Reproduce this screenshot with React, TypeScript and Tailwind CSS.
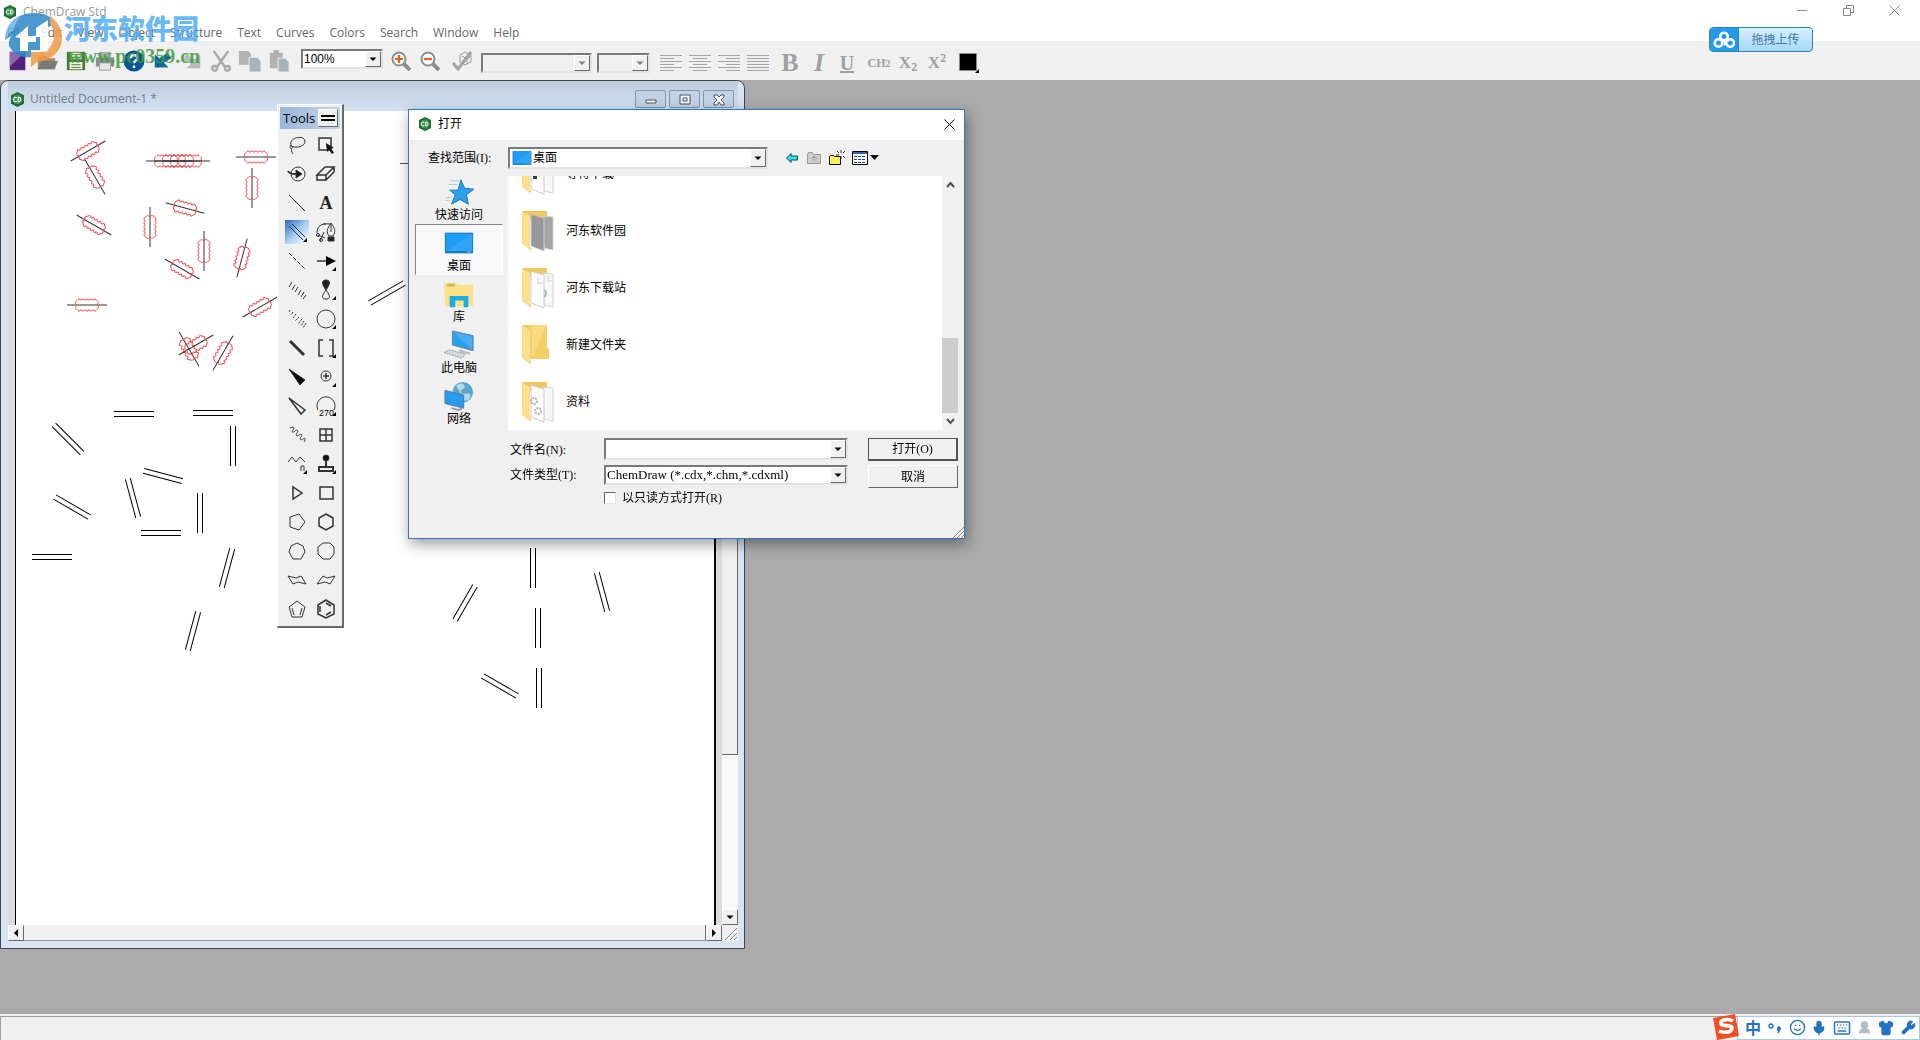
import type { ReactNode } from "react";
import { clsx } from "clsx";
import { Keyboard, Mic, Shirt, Smile, UserRound, Wrench } from "lucide-react";

const UI_FONT = "font-['Open_Sans','Noto_Sans_CJK_SC',sans-serif]";
const DIALOG_FONT = "font-['Liberation_Serif','Noto_Sans_CJK_SC',serif]";
const RAISED =
  "border border-t-white border-l-white border-r-[#696969] border-b-[#696969] bg-[#f0f0f0]";
const SUNKEN =
  "border-2 border-t-[#7a7a7a] border-l-[#7a7a7a] border-r-[#e3e3e3] border-b-[#e3e3e3]";

const MENUS = [
  "File",
  "Edit",
  "View",
  "Object",
  "Structure",
  "Text",
  "Curves",
  "Colors",
  "Search",
  "Window",
  "Help",
];

// [x, y, angle] in window coordinates
const RED_BONDS = [
  [88, 151, -30],
  [95, 177, 60],
  [166, 161, 0],
  [174, 161, 0],
  [182, 161, 0],
  [190, 161, 0],
  [256, 157, 0],
  [252, 188, 90],
  [185, 208, 15],
  [150, 227, 90],
  [94, 225, 30],
  [204, 251, 90],
  [242, 258, -75],
  [182, 269, 30],
  [87, 305, 0],
  [260, 307, -30],
  [189, 349, 60],
  [196, 345, -30],
  [223, 353, -60],
];

const DOUBLE_BONDS = [
  [134, 414, 0],
  [213, 413, 0],
  [68, 439, 45],
  [233, 446, 90],
  [163, 476, 15],
  [133, 498, 75],
  [72, 507, 30],
  [200, 513, 90],
  [161, 533, 0],
  [52, 557, 0],
  [227, 568, -75],
  [193, 631, -75],
  [387, 293, -30],
  [533, 568, 90],
  [465, 603, -60],
  [602, 592, 75],
  [538, 628, 90],
  [539, 688, 90],
  [500, 686, 30],
];

function AppIcon({ size = 14 }: { size?: number }) {
  return (
    <svg width={size} height={size} viewBox="0 0 14 14" className="shrink-0">
      <path d="M7 0l6 3v8l-6 3-6-3V3z" fill="#1d6b30" />
      <circle cx="7" cy="7" r="4.6" fill="#3f9350" />
      <path
        d="M6.3 5.4a2 2 0 1 0 0 3.2M7.7 5v4c3 .4 3-4.400 0-4z"
        fill="none"
        stroke="#fff"
        strokeWidth="1"
      />
    </svg>
  );
}

function Arrow({ dir = "down", color = "#000" }: { dir?: string; color?: string }) {
  return (
    <svg width="8" height="8" viewBox="0 0 8 8" className="shrink-0">
      {dir === "down" && <path d="M0.500 2.500h7L4 6z" fill={color} />}
      {dir === "left" && <path d="M6 0v8L2 4z" fill={color} />}
      {dir === "right" && <path d="M2 0v8l4-4z" fill={color} />}
    </svg>
  );
}

function Combo({
  label,
  value,
  className,
  disabled,
}: {
  label: string;
  value: string;
  className?: string;
  disabled?: boolean;
}) {
  return (
    <div
      className={clsx(
        "relative flex",
        SUNKEN,
        disabled ? "bg-[#f0f0f0]" : "bg-white",
        className
      )}
    >
      <select
        aria-label={label}
        disabled={disabled}
        className="min-w-0 flex-1 appearance-none bg-transparent pr-4 pl-px leading-4 text-black outline-none"
      >
        <option>{value}</option>
      </select>
      <span
        className={clsx(
          "pointer-events-none absolute inset-y-0 right-0 flex w-4 items-center justify-center",
          RAISED
        )}
      >
        <Arrow color={disabled ? "#808080" : "#000"} />
      </span>
    </div>
  );
}

const FILE_ICONS: { name: string; art: ReactNode }[] = [
  {
    name: "New",
    art: (
      <>
        <path d="M3 2h17v20H3z" fill="#53217f" />
        <path d="M3 2h17L3 18z" fill="#8c6aa9" />
      </>
    ),
  },
  {
    name: "Open",
    art: (
      <>
        <path d="M2 6h8l2 3h9v12H2z" fill="#a98a68" />
        <path d="M6 12h18l-4 9H2z" fill="#7c7a78" />
      </>
    ),
  },
  {
    name: "Save",
    art: (
      <>
        <path d="M2 2h20v20H2z" fill="#4e7a35" />
        <path d="M6 3h12v7H6zM5 13h14v8H5z" fill="#e9f2e4" />
        <path d="M7 5h10M7 8h10M7 16h10M7 19h10" stroke="#4e7a35" />
      </>
    ),
  },
  {
    name: "Print",
    art: (
      <>
        <path d="M6 2h12v6H6z" fill="#aaa" />
        <path d="M2 8h20v10H2z" fill="#8d8d8d" />
        <path d="M6 14h12v8H6z" fill="#e6e6e6" stroke="#999" />
      </>
    ),
  },
  {
    name: "Help",
    art: (
      <>
        <circle cx="12" cy="12" r="11.500" fill="#07569a" />
        <path
          d="M8.500 9c0-5 7.500-4.500 7 0-.2 2.500-3.500 2.500-3.500 5.500M12 17v2.500"
          fill="none"
          stroke="#fff"
          strokeWidth="2.600"
        />
      </>
    ),
  },
  {
    name: "Undo",
    art: <path d="M3 5v14h15l-5-5 8-5-4-6-9 6z" fill="#1066a0" />,
  },
  {
    name: "Redo",
    art: <path d="M21 5v15H6l5-5-8-4 2-6 10 5z" fill="#b4b9bd" />,
  },
  {
    name: "Cut",
    art: (
      <g fill="none" stroke="#a9a9a9" strokeWidth="2.600">
        <path d="M4 1l12 17M20 1L8 18" />
        <circle cx="5" cy="20" r="2.600" />
        <circle cx="19" cy="20" r="2.600" />
      </g>
    ),
  },
  {
    name: "Copy",
    art: (
      <>
        <path d="M0 1h10l3 3v12H0z" fill="#b2b2b2" />
        <path d="M11 8h9l4 4v12H11z" fill="#a9b3bc" stroke="#efefef" />
      </>
    ),
  },
  {
    name: "Paste",
    art: (
      <>
        <path d="M2 3h4V0h6v3h4v17H2z" fill="#b2b2b2" />
        <path d="M11 9h8l4 4v11H11z" fill="#a9b3bc" stroke="#efefef" />
      </>
    ),
  },
];

function Magnifier({ plus }: { plus?: boolean }) {
  return (
    <svg width="20" height="20" viewBox="0 0 20 20">
      <path d="M13 13l6 6" stroke="#8d8d8d" strokeWidth="4" />
      <circle cx="8" cy="8" r="6.500" fill="#fff" stroke="#8d8d8d" strokeWidth="2" />
      <path
        d={plus ? "M4 8h8M8 4v8" : "M4 8h8"}
        stroke="#e2621b"
        strokeWidth="2.200"
      />
    </svg>
  );
}

const ALIGNMENTS = [
  { name: "Align left", d: "M0 1h22M0 4h14M0 7h22M0 10h14M0 13h22M0 16h14" },
  { name: "Align center", d: "M0 1h22M4 4h14M0 7h22M4 10h14M0 13h22M4 16h14" },
  { name: "Align right", d: "M0 1h22M8 4h14M0 7h22M8 10h14M0 13h22M8 16h14" },
  { name: "Justify", d: "M0 1h22M0 4h22M0 7h22M0 10h22M0 13h22M0 16h22" },
];

function Toolbar() {
  return (
    <div className="flex h-[39px] items-center overflow-hidden bg-[#f0f0f0] pl-[3px]">
      {FILE_ICONS.map(({ name, art }) => (
        <button
          key={name}
          aria-label={name}
          className="flex w-[29px] shrink-0 justify-center"
        >
          <svg width="22" height="22" viewBox="0 0 24 24">
            {art}
          </svg>
        </button>
      ))}
      <Combo
        label="Zoom level"
        value="100%"
        className="mb-1 ml-2 h-5 w-[82px] font-['Liberation_Sans',sans-serif] text-xs"
      />
      <button aria-label="Zoom in" className="ml-2">
        <Magnifier plus />
      </button>
      <button aria-label="Zoom out" className="ml-[9px]">
        <Magnifier />
      </button>
      <button aria-label="Check structure" className="ml-3">
        <svg width="22" height="22" viewBox="0 0 22 22" fill="none">
          <path d="M1 13l5 6L19 2" stroke="#a4a4a4" strokeWidth="3" />
          <path
            d="M8 5l5-3 6 3v7l-6 3-5-3zM10 6l5 3v5M15 9l4-3"
            stroke="#999"
          />
        </svg>
      </button>
      <div className="flex items-center pt-1">
        <Combo label="Font" value="" disabled className="ml-[7px] h-5 w-[111px]" />
        <Combo label="Font size" value="" disabled className="ml-[5px] h-5 w-[53px]" />
        <div className="ml-[10px] flex gap-[7px]">
          {ALIGNMENTS.map(({ name, d }) => (
            <button key={name} aria-label={name}>
              <svg width="22" height="18" viewBox="0 0 22 18">
                <path d={d} transform="translate(0 .5)" stroke="#a5a5a5" />
              </svg>
            </button>
          ))}
        </div>
        <div className="flex items-center pl-[10px] font-['Liberation_Serif',serif] font-bold text-[#a0a0a0]">
          <button className="w-[22px] text-[26px] leading-7">B</button>
          <button className="ml-[7px] w-[22px] text-[26px] leading-7 italic">I</button>
          <button className="ml-[6px] w-[22px] text-xl leading-6 underline">U</button>
          <button className="ml-[8px] w-[26px] text-xs">
            CH<span className="text-[10px]">2</span>
          </button>
          <button className="ml-1 w-6 text-[17px] leading-6">
            X<sub className="text-xs">2</sub>
          </button>
          <button className="ml-[5px] w-6 text-[17px] leading-6">
            X<sup className="text-xs">2</sup>
          </button>
        </div>
        <button aria-label="Text color" className="ml-[10px]">
          <svg width="20" height="22" viewBox="0 0 20 22">
            <path d="M.5 1.500h17v17H.5z" stroke="#888" />
            <path d="M20 17v4h-4z" />
          </svg>
        </button>
      </div>
    </div>
  );
}

function Watermark() {
  return (
    <div className="pointer-events-none absolute top-2 left-1 flex">
      <svg width="60" height="60" viewBox="0 0 60 60" opacity="0.850">
        <path
          d="M1 32C2 16 13 5 30 5c10 0 17 3 22 10l-9 5v22H27v7c-8 1-16-2-20-8-3-4-3-6 0-13z"
          fill="#2c88c8"
        />
        <path
          d="M46 8c16 11 16 33 0 42-5 3-9 3-13 4l-6 5V44h15c8-7 11-19 4-29z"
          fill="#f19a47"
        />
        <path
          d="M11 29l13-11v10h8v-8l12-8v31h-8V29h-4v5h-8v9h-8V30z"
          fill="#fff"
        />
        <path d="M1 33C1 18 8 12 17 7c-4 6-6 9-7 14-4 3-7 7-9 12z" fill="#66b7e6" />
      </svg>
      <div className="flex flex-col pt-1">
        <span className="font-['Noto_Sans_CJK_SC',sans-serif] text-[27px] leading-8 font-black text-[#4fabf5]/85">
          河东软件园
        </span>
        <span className="pt-[2px] pl-1 font-['Liberation_Serif',serif] text-xl leading-5 font-bold text-[#3d9b3f]/85">
          www.pc0359.cn
        </span>
      </div>
    </div>
  );
}

function Structures() {
  return (
    <svg className="block h-full w-full" fill="none">
      <g transform="translate(-16 -111)">
        {RED_BONDS.map(([x, y, a]) => (
          <g key={`${x}-${y}`} transform={`translate(${x} ${y}) rotate(${a})`}>
            <path d="M-20 0h40" stroke="#333" />
            <path
              d="M-9 -5.500q1 -1.500 2 0t2 0t2 0t2 0t2 0t2 0t2 0t2 0t2 0l2 2q1 1 0 2t0 2t0 3l-2 2q-1 1.500 -2 0t-2 0t-2 0t-2 0t-2 0t-2 0t-2 0t-2 0t-2 0l-2 -2q-1 -1 0 -2t0 -2t0 -3z"
              stroke="#f04848"
            />
          </g>
        ))}
        {DOUBLE_BONDS.map(([x, y, a]) => (
          <path
            key={`${x}-${y}`}
            d="M-20 -2.500h40M-20 2.500h40"
            stroke="#000"
            transform={`translate(${x} ${y}) rotate(${a})`}
          />
        ))}
        <path d="M400 163.500h40" stroke="#555" />
      </g>
    </svg>
  );
}

const WINDOW_BUTTONS = [
  { name: "Minimize document", d: "M6 8h10v3H6z" },
  { name: "Restore document", d: "M6 3h10v9H6zM9 6h4v3H9z" },
  {
    name: "Close document",
    d: "M6 3h3l2 2 2-2h3v2l-3 3 3 3v2h-3l-2-3-2 3H6v-2l3-3-3-3z",
  },
];

function DocumentWindow() {
  return (
    <section className="flex h-[869px] w-[745px] flex-col rounded-t-lg border border-[#3f454c] bg-[#d7e4f2] pr-[6px] pb-[7px] pl-[7px]">
      <header className="flex h-[30px] shrink-0 items-center gap-[5px] bg-linear-to-b from-[#bfcddd] to-[#d3e2f2] pt-[6px] pl-[2px]">
        <AppIcon size={15} />
        <h2 className="flex-1 text-xs text-[#6f7d8c]">Untitled Document-1 *</h2>
        <div className="mr-1 flex gap-[3px]">
          {WINDOW_BUTTONS.map(({ name, d }) => (
            <button
              key={name}
              aria-label={name}
              className="flex h-[18px] w-[31px] items-center justify-center rounded-xs border border-[#8495ab] bg-[#c3d3e5]"
            >
              <svg width="22" height="15" viewBox="0 0 22 15">
                <path d={d} fill="#f5f8fb" stroke="#4a5360" />
              </svg>
            </button>
          ))}
        </div>
      </header>
      <div className="flex min-h-0 flex-1 bg-[#dcdcdc]">
        <div className="ml-[7px] min-w-0 flex-1 border-r-2 border-l border-black bg-white">
          <Structures />
        </div>
        <div className="ml-[6px] flex w-4 flex-col bg-[#f8f8f8]">
          <div className="h-[644px] border-r border-b border-[#696969] bg-[#f0f0f0]" />
          <div className="flex-1" />
          <button
            aria-label="Scroll down"
            className={clsx("flex h-4 items-center justify-center", RAISED)}
          >
            <Arrow />
          </button>
        </div>
      </div>
      <div className="flex h-4 shrink-0 bg-[#f0f0f0]">
        <button
          aria-label="Scroll left"
          className={clsx("flex w-4 items-center justify-center", RAISED)}
        >
          <Arrow dir="left" />
        </button>
        <div className="flex-1 border-r border-b border-[#696969] border-b-[#999]" />
        <button
          aria-label="Scroll right"
          className={clsx("flex w-4 items-center justify-center", RAISED)}
        >
          <Arrow dir="right" />
        </button>
        <svg width="16" height="16" viewBox="0 0 16 16">
          <path d="M3 15L15 3M8 15l7-7M12 15l3-3" stroke="#8a8a8a" />
        </svg>
      </div>
    </section>
  );
}

const TOOLS: { name: string; flag?: boolean; art: ReactNode }[] = [
  {
    name: "Lasso",
    art: (
      <path d="M6 12C4 6 13 3 18 5c6 5-3 12-12 8zm0 0c-3 2 1 5 2 2M6 15c1 2 0 4 2 6" />
    ),
  },
  {
    name: "Marquee",
    art: (
      <>
        <path d="M5 5h12v12H5z" strokeWidth="1.500" />
        <path d="M12 10l8 5-3 .5 3 4-2 1.500-3-4-2 2z" fill="#111" stroke="none" />
      </>
    ),
  },
  {
    name: "Structure perspective",
    art: (
      <>
        <circle cx="13" cy="12" r="7" />
        <path d="M3 9c1 3 4 3 12 3" strokeWidth="2" />
        <path d="M11 8l6 4-6 4z" fill="#111" />
      </>
    ),
  },
  {
    name: "Eraser",
    art: <path d="M3 13l8-8h9l-8 8zM3 13v5h9v-5M12 18l8-8V5" strokeWidth="1.500" />,
  },
  { name: "Solid bond", art: <path d="M4 4l16 16" /> },
  {
    name: "Text",
    art: (
      <text
        x="12"
        y="18"
        textAnchor="middle"
        fontFamily="Liberation Serif, serif"
        fontSize="18"
        fontWeight="bold"
        fill="#222"
        stroke="none"
      >
        A
      </text>
    ),
  },
  { name: "Multiple bonds", flag: true, art: <path d="M7 4l13 13M4 6l14 14" /> },
  {
    name: "Pen",
    art: (
      <>
        <path d="M3 13C3 6 7 3 16 4M9 4h3M4 15l7 3M10 12l-4 9" />
        <circle cx="4" cy="15" r="1.500" />
        <circle cx="7" cy="20" r="1.500" />
        <path d="M17 3c-4 6-5 9-2 13h4c3-4 2-8-2-13zm0 1v8" />
        <path d="M14 17h6v4h-6z" fill="#222" />
      </>
    ),
  },
  { name: "Dashed bond", art: <path d="M4 4l17 17" strokeDasharray="4 2" /> },
  {
    name: "Arrow",
    flag: true,
    art: (
      <>
        <path d="M3 12h10" strokeWidth="1.500" />
        <path d="M12 7l10 5-10 5z" fill="#000" stroke="none" />
      </>
    ),
  },
  {
    name: "Hashed bond",
    art: <path d="M7 4L4 9M10 7l-3 5M13 9l-3 5M16 12l-3 5M19 14l-3 5M21 17l-3 4" />,
  },
  {
    name: "Orbital",
    flag: true,
    art: (
      <>
        <path d="M12 12c-6-8-3-10 0-10s6 2 0 10z" fill="#222" />
        <path d="M12 12c-6 8-3 9 0 9s6-1 0-9z" />
      </>
    ),
  },
  {
    name: "Hashed wedged bond",
    art: (
      <path
        d="M5 3l-1 2M8 5L6 8M11 7l-3 4M14 10l-4 4M17 12l-4 5M19 14l-3 5M21 16l-3 5"
        strokeDasharray="2 1"
      />
    ),
  },
  { name: "Drawing elements", flag: true, art: <circle cx="12" cy="12" r="9" /> },
  { name: "Bold bond", art: <path d="M5 5l14 14" strokeWidth="3" /> },
  {
    name: "Brackets",
    flag: true,
    art: <path d="M9 4H5v16h4M15 4h4v16h-4" strokeWidth="1.500" />,
  },
  { name: "Wedged bond", art: <path d="M4 4l16 11-5 5z" fill="#000" /> },
  {
    name: "Chemical symbols",
    flag: true,
    art: (
      <>
        <circle cx="12" cy="11" r="5" />
        <path d="M9 11h6M12 8v6" strokeWidth="1.500" />
      </>
    ),
  },
  { name: "Hollow wedged bond", art: <path d="M4 4l16 12-4 4z" strokeWidth="1.500" /> },
  {
    name: "Arc",
    flag: true,
    art: (
      <>
        <path d="M4 16a9 9 0 1 1 16 0" />
        <text
          x="5"
          y="22"
          fontFamily="Liberation Sans, sans-serif"
          fontSize="9"
          fill="#000"
          stroke="none"
        >
          270
        </text>
      </>
    ),
  },
  {
    name: "Wavy bond",
    art: (
      <path d="M5 5c4-2 5 0 3 2s0 3 2 1 4 0 2 2 0 4 2 2 4 0 2 2 0 4 2 2 3 0 1 3" />
    ),
  },
  { name: "Table", art: <path d="M6 6h12v12H6zM12 6v12M6 12h12" strokeWidth="1.500" /> },
  {
    name: "Acyclic chain",
    flag: true,
    art: (
      <>
        <path d="M3 10l4-5 4 5 4-5 5 5" />
        <path d="M16 19v-5h3v5" />
      </>
    ),
  },
  {
    name: "Templates",
    flag: true,
    art: (
      <>
        <circle cx="12" cy="6" r="3" fill="#111" />
        <path d="M12 8v6M5 15h14v4H5z" strokeWidth="2" />
      </>
    ),
  },
  { name: "Cyclopropane", art: <path d="M8 6v12l9-6z" strokeWidth="1.500" /> },
  { name: "Cyclobutane", art: <path d="M6 6h13v12H6z" strokeWidth="1.500" /> },
  { name: "Cyclopentane", art: <path d="M5 7l9-3 6 8-6 8-9-3z" /> },
  { name: "Cyclohexane", art: <path d="M12 4l7 4v8l-7 4-7-4V8z" strokeWidth="1.500" /> },
  { name: "Cycloheptane", art: <path d="M12 4l6 3 2 6-4 7H8l-4-7 2-6z" /> },
  { name: "Cyclooctane", art: <path d="M9 4h7l4 4v7l-4 5H9l-5-5V8z" /> },
  { name: "Chair one", art: <path d="M3 8l8 2 5-2 5 8-8-2-5 2z" /> },
  { name: "Chair two", art: <path d="M21 8l-8 2-4-2-6 8 8-2 5 2z" /> },
  {
    name: "Cyclopentadiene",
    art: <path d="M12 4l8 6-3 10H7L4 10zM17 11l-2 7M7 11l2 7" />,
  },
  {
    name: "Benzene",
    art: <path d="M12 3l8 5v9l-8 4-8-4V8zM12 6l5 3M17 15l-5 3M6 9v6" strokeWidth="1.500" />,
  },
];

function ToolsPalette() {
  return (
    <aside
      className={clsx(
        "absolute top-[104px] left-[277px] w-[67px] p-[2px] pb-1",
        RAISED,
        "border-r-2 border-b-2"
      )}
    >
      <header className="flex h-[22px] items-center justify-between bg-linear-to-r from-[#9ab5d8] to-[#c5d6ea] pr-[2px] pl-[3px]">
        <h2 className="pb-px text-[13px] leading-5 text-black">Tools</h2>
        <button
          aria-label="Palette menu"
          className={clsx("flex h-[18px] w-5 items-center justify-center", RAISED)}
        >
          <svg width="14" height="6" viewBox="0 0 14 6">
            <path d="M0 1h14M0 5h14" stroke="#000" strokeWidth="2" />
          </svg>
        </button>
      </header>
      <div className="grid grid-cols-[24px_24px] gap-x-[5px] gap-y-[5px] pt-1 pb-px pl-[5px]">
        {TOOLS.map(({ name, flag, art }) => (
          <button
            key={name}
            aria-label={name}
            className={clsx(
              "size-6",
              name === "Multiple bonds" &&
                "bg-linear-to-br from-[#2a63b8] via-[#a7cdf3] to-white"
            )}
          >
            <svg
              width="24"
              height="24"
              viewBox="0 0 24 24"
              fill="none"
              stroke="#333"
              className="block"
            >
              {art}
              {flag && <path d="M22 18v4h-4z" fill="#000" stroke="none" />}
            </svg>
          </button>
        ))}
      </div>
    </aside>
  );
}

const DesktopArt = (
  <>
    <path d="M1.500 5.500h29v21h-29z" fill="#1e9df5" stroke="#0870bd" />
    <path d="M2 25L30 6v20H2z" fill="#44b0fa" opacity="0.500" />
    <path d="M2 25.500h28" stroke="#0a5f9e" />
    <path d="M25 25.500h4" stroke="#fff" strokeDasharray="1 1" />
  </>
);

const PLACES: { name: string; art: ReactNode }[] = [
  {
    name: "快速访问",
    art: (
      <>
        <path
          d="M18 3l4 9 10 1-8 6 2 10-9-5-9 5 4-10-6-5h9z"
          fill="#2da0ea"
          stroke="#1379bd"
        />
        <path d="M7 4h9M5 8h9M2 22h6M1 25h5" stroke="#9ec9e8" />
      </>
    ),
  },
  { name: "桌面", art: DesktopArt },
  {
    name: "库",
    art: (
      <>
        <path d="M0 4h12l3 2h16v23H1z" fill="#fce08a" />
        <path d="M3 5h9v3H3z" fill="#d8b757" />
        <path d="M6 18h20v12h-5v-7h-9v7H6z" fill="#18afe0" />
      </>
    ),
  },
  {
    name: "此电脑",
    art: (
      <>
        <path d="M9 1l22 5v16L9 16z" fill="#299ff0" stroke="#5e7f96" />
        <path d="M10 2l20 19V7z" fill="#69bdf7" opacity="0.500" />
        <path d="M17 20l-1 4 12 2v-2l-7-2z" fill="#b7bec4" />
        <path d="M0 24l6-3 17 5-4 4z" fill="#d5d9dc" stroke="#90979c" strokeDasharray="2 1" />
      </>
    ),
  },
  {
    name: "网络",
    art: (
      <>
        <circle cx="20" cy="12" r="11" fill="#5fa6c8" />
        <path d="M13 5c4-4 9-2 9 1s-5 2-4 6 9-1 10 3-3 7-6 6" fill="#b3dbe2" />
        <path d="M1 10l20 5v14L1 24z" fill="#269cf0" stroke="#59788d" />
        <path d="M8 29l8 2 3-2" stroke="#8f999f" fill="none" strokeWidth="2" />
      </>
    ),
  },
];

function FolderIcon({ kind }: { kind: string }) {
  return (
    <svg width="36" height="44" viewBox="0 0 36 44" className="shrink-0">
      <path d="M1 2h25v9H1z" fill="#efc75b" />
      {kind === "empty" ? (
        <>
          <path d="M8 2h18v22l2 2v10H8z" fill="#f4cf67" />
          <path d="M11 2h15L11 34z" fill="#f8da7f" />
        </>
      ) : (
        <>
          <path
            d="M21 7l11 1v33l-9-2z"
            fill={kind === "gray" ? "#a5a5a5" : "#f7f7f7"}
            stroke="#d5d5d5"
          />
          <path
            d="M10 5l13 4v33l-13-5z"
            fill={kind === "gray" ? "#999" : "#fdfdfd"}
            stroke="#ccc"
          />
        </>
      )}
      {kind === "gears" && (
        <g fill="none" stroke="#a9b5bf" strokeWidth="2" strokeDasharray="2 1">
          <circle cx="13" cy="21" r="3" />
          <circle cx="17" cy="31" r="3" />
        </g>
      )}
      {kind === "docs" && (
        <>
          <path d="M17 11v6h5M27 10v5h4" fill="none" stroke="#ccc" />
          <path d="M23 24a4 4 0 0 1 0 7" fill="none" stroke="#a9b5bf" strokeWidth="2" />
        </>
      )}
      {kind === "dark" && <path d="M12 22h4v5h-4z" fill="#24483a" />}
      <path d="M1 2l8 5v34l-8-6z" fill="#fbdf8d" />
      <path d="M9 37l1 4-2-1z" fill="#e6c05a" />
    </svg>
  );
}

const FOLDERS = [
  { name: "等待下载", kind: "dark" },
  { name: "河东软件园", kind: "gray" },
  { name: "河东下载站", kind: "docs" },
  { name: "新建文件夹", kind: "empty" },
  { name: "资料", kind: "gears" },
];

function Chevron({ d }: { d: string }) {
  return (
    <svg width="9" height="7" viewBox="0 0 9 7">
      <path d={d} fill="none" stroke="#505050" strokeWidth="2" />
    </svg>
  );
}

function OpenDialog() {
  return (
    <section
      role="dialog"
      aria-label="打开"
      className={clsx(
        "absolute top-[109px] left-[408px] h-[430px] w-[557px] border border-[#2f7ab8] bg-[#f0f0f0] text-xs text-black shadow-[2px_5px_14px_rgba(0,0,0,0.4)]",
        DIALOG_FONT
      )}
    >
      <header className="flex h-[30px] items-center gap-[6px] bg-white pr-[9px] pb-[2px] pl-[9px]">
        <AppIcon />
        <h2 className="flex-1">打开</h2>
        <button aria-label="关闭">
          <svg width="11" height="11" viewBox="0 0 11 11">
            <path d="M.5.5l10 10M10.500.5l-10 10" stroke="#000" />
          </svg>
        </button>
      </header>
      <div className="flex h-9 items-center">
        <label htmlFor="look-in" className="w-[99px] pl-[19px]">
          查找范围(I):
        </label>
        <div className={clsx("relative flex h-[22px] w-[260px] bg-white", SUNKEN)}>
          <svg
            width="20"
            height="18"
            viewBox="0 4 32 24"
            className="pointer-events-none absolute left-[2px]"
          >
            {DesktopArt}
          </svg>
          <select
            id="look-in"
            className="flex-1 appearance-none bg-transparent pl-[23px] outline-none"
          >
            <option>桌面</option>
          </select>
          <span
            className={clsx(
              "pointer-events-none absolute inset-y-0 right-0 flex w-4 items-center justify-center",
              RAISED
            )}
          >
            <Arrow />
          </span>
        </div>
        <div className="flex items-center gap-[7px] pl-[17px]">
          <button aria-label="后退">
            <svg width="14" height="16" viewBox="0 0 14 16">
              <path d="M1.500 8L6 3.500V6h6.500v4H6v2.500z" fill="#2ee6e6" stroke="#0a4a5c" />
            </svg>
          </button>
          <button aria-label="上一级" disabled>
            <svg width="16" height="14" viewBox="0 0 16 14">
              <path d="M1.500 12.500v-9l1-2h4l1 2h7v9z" fill="#ccc" stroke="#999" />
              <path d="M5 8l3-3 3 3M8 6v4" fill="none" stroke="#999" />
            </svg>
          </button>
          <button aria-label="新建文件夹">
            <svg width="16" height="16" viewBox="0 0 16 16">
              <path d="M.5 14.500v-8l1-1h3l1 1h6v8z" fill="#fff34d" stroke="#000" />
              <path
                d="M12 0v3M12 6v3M8 1l2 2M14 3l2-2M14 6l2 2M7 5h3"
                stroke="#333"
              />
            </svg>
          </button>
          <button aria-label="查看" className="flex items-center gap-[2px]">
            <svg width="16" height="14" viewBox="0 0 16 14">
              <path d="M.5.5h15v13H.5z" fill="#fff" stroke="#000" />
              <path d="M1 2h14" stroke="#2c63b8" strokeWidth="2" />
              <path
                d="M2 5.500h12M2 8.500h12M2 11.500h12"
                stroke="#223c8c"
                strokeDasharray="3 1"
              />
            </svg>
            <svg width="9" height="6" viewBox="0 0 9 6">
              <path d="M0 0h9L4.500 5z" />
            </svg>
          </button>
        </div>
      </div>
      <div className="flex h-[254px]">
        <nav className="mr-[5px] ml-[6px] flex w-[88px] flex-col">
          {PLACES.map(({ name, art }, i) => (
            <button
              key={name}
              className={clsx(
                "flex flex-col items-center justify-end border leading-4",
                i === 0 ? "h-12" : "h-[51px]",
                name === "桌面"
                  ? "border-t-[#858585] border-r-white border-b-white border-l-[#858585] bg-[#f8f8f8]"
                  : "border-transparent"
              )}
            >
              <svg width="30" height="30" viewBox="0 0 32 32">
                {art}
              </svg>
              {name}
            </button>
          ))}
        </nav>
        <div className="flex min-w-0 flex-1 bg-white">
          <ul className="flex flex-1 flex-col justify-end overflow-hidden">
            {FOLDERS.map(({ name, kind }) => (
              <li
                key={name}
                className="flex h-[57px] shrink-0 items-center gap-[9px] pt-px pl-[13px]"
              >
                <FolderIcon kind={kind} />
                {name}
              </li>
            ))}
          </ul>
        </div>
        <div className="mr-[6px] flex w-4 flex-col items-center">
          <button aria-label="向上滚动" className="flex h-[17px] items-center">
            <Chevron d="M1 6l3.500-4L8 6" />
          </button>
          <div className="flex-1" />
          <div className="h-[75px] w-full bg-[#cdcdcd]" />
          <button aria-label="向下滚动" className="flex h-[17px] items-center">
            <Chevron d="M1 1l3.500 4L8 1" />
          </button>
        </div>
      </div>
      <form className="grid grid-cols-[95px_244px_90px] gap-y-1 pt-2 pl-[100px]">
        <label htmlFor="file-name" className="self-center pl-px">
          文件名(N):
        </label>
        <div className={clsx("flex h-[22px] bg-white", SUNKEN)}>
          <input
            id="file-name"
            autoFocus
            className="min-w-0 flex-1 bg-transparent pl-px outline-none"
          />
          <button
            type="button"
            aria-label="历史文件"
            className={clsx("flex w-4 items-center justify-center", RAISED)}
          >
            <Arrow />
          </button>
        </div>
        <button
          type="button"
          className="ml-5 h-[23px] w-[90px] border border-r-2 border-b-2 border-[#555] bg-[#f0f0f0]"
        >
          打开(O)
        </button>
        <label htmlFor="file-type" className="pl-px leading-5">
          文件类型(T):
        </label>
        <div className={clsx("relative flex h-5 bg-white", SUNKEN)}>
          <select
            id="file-type"
            className="min-w-0 flex-1 appearance-none bg-transparent pr-4 pl-px text-[13px] leading-4 outline-none"
          >
            <option>ChemDraw (*.cdx,*.chm,*.cdxml)</option>
          </select>
          <span
            className={clsx(
              "pointer-events-none absolute inset-y-0 right-0 flex w-4 items-center justify-center",
              RAISED
            )}
          >
            <Arrow />
          </span>
        </div>
        <button type="button" className={clsx("ml-5 h-[23px] w-[90px]", RAISED)}>
          取消
        </button>
        <label className="col-start-2 flex items-center gap-[6px] leading-3">
          <input
            type="checkbox"
            className="size-3 appearance-none border border-t-[#696969] border-r-[#e3e3e3] border-b-[#e3e3e3] border-l-[#696969] bg-white"
          />
          以只读方式打开(R)
        </label>
      </form>
      <svg
        width="12"
        height="12"
        viewBox="0 0 12 12"
        className="absolute right-0 bottom-0"
      >
        <path d="M1 12L12 1M5 12l7-7M9 12l3-3" stroke="#8a8a8a" />
      </svg>
    </section>
  );
}

function UploadButton() {
  return (
    <button className="absolute top-[27px] right-[107px] flex h-[25px] w-[104px] overflow-hidden rounded-sm border border-[#3385b0] bg-linear-to-b from-[#d6efff] to-[#a5d8fa] text-xs text-[#44779c]">
      <span className="flex h-full w-[29px] items-center justify-center border-r border-[#3385b0] bg-[#239be9]">
        <svg width="22" height="18" viewBox="0 0 22 18">
          <g fill="none" stroke="#fff" strokeWidth="2.600">
            <circle cx="11" cy="5.500" r="3.800" />
            <circle cx="5.500" cy="12" r="3.800" />
            <path d="M11 9l3 5a3.800 3.800 0 1 0 0-4l-3 4" />
          </g>
        </svg>
      </span>
      <span className="flex-1 self-center pt-px">拖拽上传</span>
    </button>
  );
}

function StatusBar() {
  return (
    <footer className="flex h-[26px] shrink-0 items-end bg-[#f0f0f0] pt-[2px]">
      <div className="h-6 flex-1 border-t border-l border-[#a0a0a0]" />
      <div className="relative flex h-6 w-[183px] items-center border border-[#a9c8e6] bg-white pb-px pl-1 text-[#2273c4]">
        <svg
          width="28"
          height="28"
          viewBox="0 0 28 28"
          className="absolute -top-1 -left-[26px]"
        >
          <path d="M1 5l22-4 4 22-22 4z" fill="#f04e23" />
          <path
            d="M21 8c-5-3-14-1-12 3 2 3 11 0 11 4 0 5-9 5-13 3"
            fill="none"
            stroke="#fff"
            strokeWidth="3.600"
          />
        </svg>
        <button className="w-[22px] text-base leading-5 font-bold">中</button>
        <button aria-label="中文标点" className="flex w-[22px] justify-center">
          <svg width="14" height="14" viewBox="0 0 14 14">
            <circle cx="3" cy="5" r="2" fill="none" stroke="currentColor" strokeWidth="1.400" />
            <path d="M9 7a2 2 0 1 1 3 2c0 2-1 3-3 4 1-2 1-3 0-4z" fill="currentColor" />
          </svg>
        </button>
        <button aria-label="表情" className="flex w-[22px] justify-center">
          <Smile size={17} />
        </button>
        <button aria-label="语音" className="flex w-[22px] justify-center">
          <Mic size={16} fill="currentColor" />
        </button>
        <button aria-label="软键盘" className="flex w-[23px] justify-center">
          <Keyboard size={18} />
        </button>
        <button
          aria-label="登录"
          className="flex w-[22px] items-end justify-center text-[#b4bccb]"
        >
          <UserRound size={15} fill="currentColor" />
        </button>
        <button aria-label="皮肤" className="flex w-[22px] justify-center">
          <Shirt size={16} fill="currentColor" />
        </button>
        <button aria-label="工具箱" className="flex w-[22px] justify-center">
          <Wrench size={15} fill="currentColor" />
        </button>
      </div>
    </footer>
  );
}

export default function App() {
  return (
    <div
      className={clsx(
        "relative flex min-h-screen w-full flex-col overflow-hidden bg-[#ababab]",
        UI_FONT
      )}
    >
      <header className="flex h-6 items-center bg-white pr-5 pl-[3px]">
        <AppIcon />
        <h1 className="flex-1 pl-[6px] text-xs text-[#999]">ChemDraw Std</h1>
        <div className="flex gap-[35px] text-[#888]">
          {[
            { name: "Minimize", d: "M0 5.500h10" },
            { name: "Restore", d: "M.5 3.500h7v7h-7zM3.500 3V.5h7v7H8" },
            { name: "Close", d: "M.5.5l10 10M10.500.5l-10 10" },
          ].map(({ name, d }) => (
            <button key={name} aria-label={name} className="pb-1">
              <svg width="11" height="11" viewBox="0 0 11 11">
                <path d={d} fill="none" stroke="currentColor" />
              </svg>
            </button>
          ))}
        </div>
      </header>
      <nav className="flex h-[17px] items-center gap-[15px] bg-white pl-[7px] text-xs text-[#666]">
        {MENUS.map((menu) => (
          <button key={menu}>{menu}</button>
        ))}
      </nav>
      <Toolbar />
      <main className="flex-1">
        <DocumentWindow />
      </main>
      <StatusBar />
      <Watermark />
      <UploadButton />
      <ToolsPalette />
      <OpenDialog />
    </div>
  );
}
